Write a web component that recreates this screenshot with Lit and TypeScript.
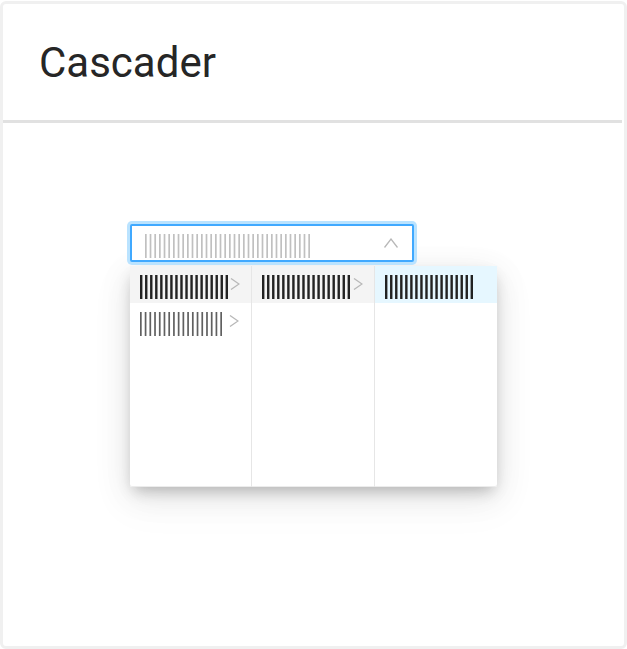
import { LitElement, html, css, svg } from "lit";
import { customElement, property } from "lit/decorators.js";

/** A run of evenly spaced vertical bars that stands in for a label. */
@customElement("bar-label")
export class BarLabel extends LitElement {
  @property({ type: Number }) count = 18;
  @property({ type: Number }) span = 88;
  @property({ type: Number }) weight = 2;

  static styles = css`
    :host {
      display: block;
      flex: none;
    }
    .bars {
      display: block;
      fill: currentColor;
    }
  `;

  render() {
    const pitch = (this.span - this.weight) / (this.count - 1);
    return html`<svg class="bars" width=${this.span} height="24" aria-hidden="true">
      ${Array.from({ length: this.count }, (_, i) =>
        svg`<rect x=${i * pitch} y="0" width=${this.weight} height="24"></rect>`
      )}
    </svg>`;
  }
}

interface Option {
  name: string;
  state: "plain" | "open" | "selected";
}

@customElement("app-root")
export class AppRoot extends LitElement {
  static styles = css`
    :host {
      display: block;
      font-family: Roboto, sans-serif;
      color: #262626;
    }
    .card {
      box-sizing: border-box;
      min-height: calc(100vh - 1px);
      margin-top: 1px;
      border: 3px solid #f0f0f0;
      border-radius: 6px;
      background: #fff;
    }
    .title {
      margin: 0 2px 0 0;
      padding: 33px 36px 31px;
      border-bottom: 3px solid #e1e1e1;
      font-size: 42px;
      font-weight: 400;
      line-height: 52px;
    }
    .demo {
      width: 367px;
      max-width: 100%;
      margin: 101px auto 0;
    }
    button {
      display: flex;
      align-items: center;
      justify-content: space-between;
      box-sizing: border-box;
      margin: 0;
      border: 0;
      background: none;
      font: inherit;
      text-align: left;
    }
    .trigger {
      width: 284px;
      height: 38px;
      padding: 6px 14px 0 13px;
      border: 2px solid #40a9ff;
      border-radius: 2px;
      background: #fff;
      box-shadow: 0 0 0 3px #bae3ff;
      color: #c0c0c0;
      position: relative;
      z-index: 1;
    }
    .icon {
      display: block;
      flex: none;
      fill: none;
      stroke: #b8b8b8;
      stroke-width: 1.3;
    }
    .trigger .icon {
      margin-bottom: 6px;
    }
    .menu {
      display: grid;
      grid-template-columns: repeat(3, 1fr);
      min-height: 221px;
      margin-top: 4px;
      border-radius: 2px;
      background: #fff;
      box-shadow:
        inset 0 -1px 0 #ececec,
        0 7px 14px -4px rgba(0, 0, 0, 0.24),
        0 8px 32px rgba(0, 0, 0, 0.1),
        0 14px 44px 8px rgba(0, 0, 0, 0.03);
    }
    .column:not(:last-child) {
      border-right: 1px solid #e6e6e6;
    }
    .option {
      width: 100%;
      height: 37px;
      padding: 5px 11px 0 10px;
      color: #222;
    }
    .option .icon {
      margin-bottom: 6px;
    }
    .option.plain {
      padding-right: 12px;
      color: #606060;
    }
    .open {
      background: #f4f4f4;
    }
    .selected {
      background: #e6f7ff;
    }
  `;

  private columns: Option[][] = [
    [
      { name: "Level one, first", state: "open" },
      { name: "Level one, second", state: "plain" },
    ],
    [{ name: "Level two, first", state: "open" }],
    [{ name: "Level three, first", state: "selected" }],
  ];

  private option(o: Option) {
    const strong = o.state !== "plain";
    return html`<button
      class="option ${o.state}"
      role="option"
      aria-label=${o.name}
      aria-selected=${strong ? "true" : "false"}
    >
      <bar-label .span=${strong ? 88 : 82} .weight=${strong ? 2.4 : 1.7}></bar-label>
      ${o.state === "selected"
        ? ""
        : html`<svg class="icon" width="10" height="12" aria-hidden="true">
            <path d="M1 0.5 L9 6 L1 11.5"></path>
          </svg>`}
    </button>`;
  }

  render() {
    return html`<main class="card">
      <h1 class="title">Cascader</h1>
      <section class="demo">
        <button class="trigger" aria-label="Choose a value" aria-expanded="true">
          <bar-label .count=${36} .span=${165} .weight=${1.7}></bar-label>
          <svg class="icon" width="14" height="10" aria-hidden="true">
            <path d="M0.5 9.5 L7 1 L13.5 9.5"></path>
          </svg>
        </button>
        <div class="menu">
          ${this.columns.map(
            (c) => html`<div class="column" role="listbox" aria-label="Options">
              ${c.map((o) => this.option(o))}
            </div>`
          )}
        </div>
      </section>
    </main>`;
  }
}
